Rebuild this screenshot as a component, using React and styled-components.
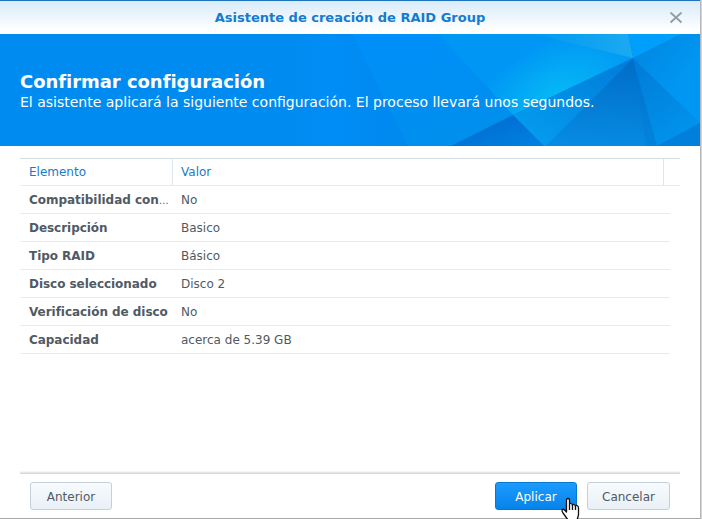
import React from "react";
import styled, { createGlobalStyle, css } from "styled-components";

const GlobalStyle = createGlobalStyle`
  * { box-sizing: border-box; }
  body { margin: 0; background: #cfcfcf; font-family: "DejaVu Sans", Verdana, sans-serif; font-size: 12px; }
`;

const Backdrop = styled.div`
  width: 702px;
  height: 519px;
  padding: 0 2px 1px 0;
  overflow: hidden;
  background: linear-gradient(90deg, #a8a8a8 0 700px, #b9b9bb 700px 701px, #d2d2d4 701px);
`;

const Dialog = styled.main`
  display: flex;
  flex-direction: column;
  width: 700px;
  height: 518px;
  background: #fff;
`;

const TitleBar = styled.header`
  display: flex;
  align-items: center;
  height: 34px;
  flex: none;
  padding: 0 17px 0 31px;
  border-top: 1px solid #1f74bd;
  background: linear-gradient(#d8ebfa, #fff 90%);
`;

const Title = styled.h1`
  flex: 1;
  margin: 0;
  text-align: center;
  font-size: 13px;
  line-height: 32px;
  color: #137bd1;
`;

const CloseButton = styled.button`
  display: flex;
  padding: 0;
  border: 0;
  background: none;
`;

const Banner = styled.section`
  display: grid;
  height: 112px;
  flex: none;
  color: #fff;
  > * { grid-area: 1 / 1; }
`;

const BannerText = styled.div`
  padding: 37px 20px 0;
`;

const Heading = styled.h2`
  margin: 0;
  font-size: 18px;
  line-height: 21px;
  letter-spacing: -0.04px;
`;

const Lead = styled.p`
  margin: 0;
  font-size: 14px;
  line-height: 20px;
  white-space: nowrap;
`;

const Content = styled.section`
  flex: 1;
  padding: 12px 20px 0;
`;

const HeaderRow = styled.div`
  display: grid;
  grid-template-columns: 153px 491px 16px;
  height: 28px;
  border-top: 1px solid #d5dde3;
  border-bottom: 1px solid #e6ebef;
  color: #1c79c6;
`;

const Row = styled.div`
  display: grid;
  grid-template-columns: 153px 1fr;
  width: 650px;
  height: 28px;
  border-bottom: 1px solid #e8ebee;
  color: #505a64;
`;

const Cell = styled.div`
  padding: 0 0 0 ${(p) => (p.$value ? 8 : 9)}px;
  line-height: ${(p) => (p.$divided ? 26 : 28)}px;
  white-space: nowrap;
  ${(p) => p.$label && css`font-weight: bold; letter-spacing: -0.04px;`}
  ${(p) => p.$divided && css`border-right: 1px solid #dfe6ec;`}
`;

const Ellipsis = styled.span`
  font-weight: normal;
  font-size: 10px;
`;

const Footer = styled.footer`
  display: flex;
  gap: 10px;
  height: 47px;
  flex: none;
  margin: 0 20px;
  padding: 11px 10px 0;
  background: linear-gradient(#f6f6f6 0 1px, #e6e6e6 1px 2px, #d8d8d8 2px 3px, #fff 3px);
`;

const Button = styled.button`
  width: ${(p) => p.$width}px;
  height: 28px;
  padding: 2px 0 0;
  border: 1px solid ${(p) => (p.$primary ? "#0877ce" : "#c3d0db")};
  border-radius: 3px;
  background: ${(p) => (p.$primary ? "linear-gradient(#1c9bff, #0583e9)" : "linear-gradient(#f7fbfe, #e9f0f6)")};
  color: ${(p) => (p.$primary ? "#fff" : "#505a64")};
  font: 12px "DejaVu Sans", Verdana, sans-serif;
  ${(p) => p.$start && css`margin-right: auto;`}
`;

const Pointer = styled.svg`
  position: absolute;
  left: 559px;
  top: 496px;
`;

const entries = [
  ["Compatibilidad con", "No", true],
  ["Descripción", "Basico"],
  ["Tipo RAID", "Básico"],
  ["Disco seleccionado", "Disco 2"],
  ["Verificación de disco", "No"],
  ["Capacidad", "acerca de 5.39 GB"],
];

function Facets() {
  return (
    <svg width="700" height="112" viewBox="0 0 700 112" aria-hidden="true">
      <defs>
        <linearGradient id="left" gradientUnits="userSpaceOnUse" x1="290" y1="0" x2="408" y2="0"><stop stopColor="#008bf0" /><stop offset=".35" stopColor="#008df6" /><stop offset="1" stopColor="#0088ee" /></linearGradient>
        <linearGradient id="mid" x1="0" y1="0" x2=".4" y2="1"><stop stopColor="#008ffb" /><stop offset="1" stopColor="#008fed" /></linearGradient>
        <radialGradient id="glow" gradientUnits="userSpaceOnUse" cx="0" cy="0" r="1" gradientTransform="translate(556 60) rotate(-26) scale(92 52)"><stop stopColor="#05b8f6" /><stop offset="1" stopColor="#0096f4" /></radialGradient>
        <linearGradient id="top"><stop stopColor="#0099f2" /><stop offset="1" stopColor="#1caaf1" /></linearGradient>
        <linearGradient id="deep" x1=".5" y1="0" x2=".4" y2="1"><stop stopColor="#006dc8" /><stop offset="1" stopColor="#078be2" /></linearGradient>
        <linearGradient id="fold" x1="1" y1="0" x2="0" y2="1"><stop stopColor="#007bd9" /><stop offset="1" stopColor="#049ff0" /></linearGradient>
        <linearGradient id="right" x1="0" y1="0" x2="1" y2="1"><stop stopColor="#0085df" /><stop offset=".65" stopColor="#0097f2" /></linearGradient>
        <linearGradient id="wedge" x1="0" y1="0" x2=".6" y2="1"><stop stopColor="#007bd6" /><stop offset="1" stopColor="#0093ed" /></linearGradient>
        <linearGradient id="bottom" x1="0" y1="0" x2="1" y2="1"><stop stopColor="#0067cb" /><stop offset="1" stopColor="#0082e3" /></linearGradient>
      </defs>
      <path fill="#008bf0" d="M0 0H700V112H0Z" />
      <path fill="url(#left)" d="M290 0H352L408 112H290Z" />
      <path fill="url(#mid)" d="M352 0H438L513 81L451 112H408Z" />
      <path fill="url(#glow)" d="M438 0H532L633 24L513 81Z" />
      <path fill="url(#top)" d="M532 0H628L633 24Z" />
      <path fill="#009ffc" d="M628 0H681L633 24Z" />
      <path fill="url(#fold)" d="M633 24L546 112H544L513 81Z" />
      <path fill="url(#bottom)" d="M451 112L513 81L544 112Z" />
      <path fill="url(#deep)" d="M633 24L546 112H657Z" />
      <path fill="#0077d0" opacity=".35" d="M633 24L646 112H657Z" />
      <path fill="url(#wedge)" d="M633 24L657 112L700 89Z" />
      <path fill="url(#right)" d="M633 24L681 0H700V89Z" />
      <path fill="#007fdb" d="M657 112L700 89V112Z" />
    </svg>
  );
}

export default function App() {
  return (
    <>
      <GlobalStyle />
      <Backdrop>
        <Dialog>
          <TitleBar>
            <Title>Asistente de creación de RAID Group</Title>
            <CloseButton aria-label="Cerrar">
              <svg width="14" height="12" viewBox="0 0 14 12" fill="none" stroke="#929ba2" strokeWidth="1.8">
                <path d="M1.5 .5L12.5 10.5M12.5 .5L1.5 10.5" />
              </svg>
            </CloseButton>
          </TitleBar>
          <Banner>
            <Facets />
            <BannerText>
              <Heading>Confirmar configuración</Heading>
              <Lead>El asistente aplicará la siguiente configuración. El proceso llevará unos segundos.</Lead>
            </BannerText>
          </Banner>
          <Content>
            <HeaderRow>
              <Cell $divided>Elemento</Cell>
              <Cell $value $divided>Valor</Cell>
            </HeaderRow>
            {entries.map(([label, value, truncated]) => (
              <Row key={label}>
                <Cell $label>{label}{truncated && <Ellipsis>…</Ellipsis>}</Cell>
                <Cell $value>{value}</Cell>
              </Row>
            ))}
          </Content>
          <Footer>
            <Button $width={82} $start>Anterior</Button>
            <Button $width={82} $primary>Aplicar</Button>
            <Button $width={83}>Cancelar</Button>
          </Footer>
        </Dialog>
        <Pointer width="22" height="24" viewBox="0 0 22 24" fill="#fff" stroke="#111" strokeWidth="1.3" strokeLinejoin="round">
          <path d="M7.5 15V4Q7.5 2.5 9 2.5Q10.5 2.5 10.5 4V9Q10.5 7 12 7.5Q13.5 8 13.5 9.5Q13.5 8 15 8.5Q16.5 9 16.5 10.5Q16.5 9 18 9.5Q19.5 10 19.5 12V19L18 24H9L4 17Q2 14 4 13Q5 13 7.5 16Z" />
          <path fill="none" d="M10.5 9V14M13.5 9V14M16.5 10V14" />
        </Pointer>
      </Backdrop>
    </>
  );
}
